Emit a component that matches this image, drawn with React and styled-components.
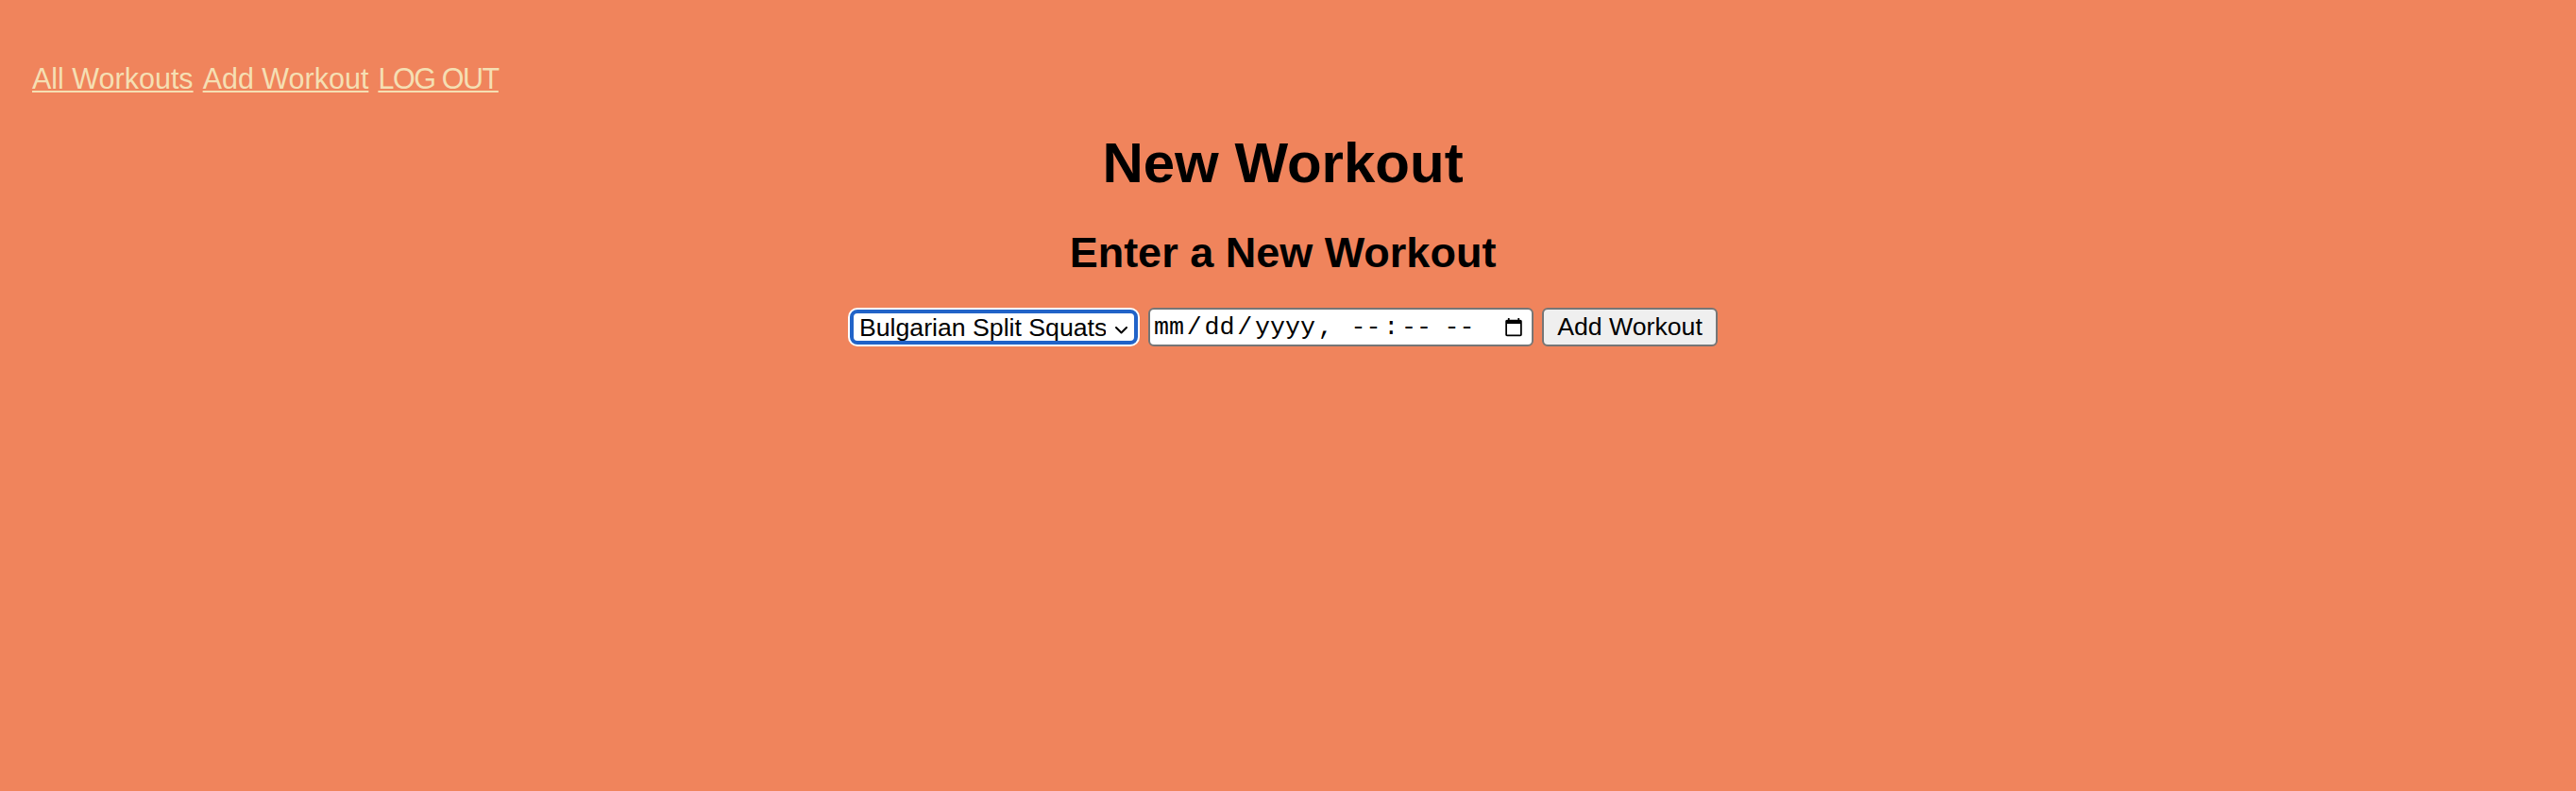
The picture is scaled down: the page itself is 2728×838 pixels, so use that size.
import React from "react";
import styled, { createGlobalStyle } from "styled-components";

const GlobalStyle = createGlobalStyle`
  html, body {
    margin: 0;
    padding: 0;
    background-color: #f0845c;
  }
  body {
    font-family: "Liberation Sans", Arial, sans-serif;
    color: #000;
  }
`;

const Page = styled.div`
  min-height: 100vh;
  background-color: #f0845c;
  padding-top: 66px;
  box-sizing: border-box;
`;

const Nav = styled.nav`
  display: flex;
  gap: 10px;
  padding-left: 34px;
  font-size: 30.5px;
  line-height: 34px;
`;

const NavLink = styled.a`
  color: #f5dfb3;
  text-decoration: underline;
  text-decoration-thickness: 2px;
  text-underline-offset: 2px;
  letter-spacing: ${({ $tight }) => ($tight ? "-1.4px" : "normal")};
`;

const Main = styled.main`
  padding-right: 11px;
  text-align: center;
`;

const Title = styled.h1`
  margin: 39px 0 0;
  font-size: 60px;
  line-height: 67px;
  font-weight: bold;
`;

const Subtitle = styled.h2`
  margin: 36px 0 0;
  font-size: 45px;
  line-height: 51px;
  font-weight: bold;
`;

const Form = styled.form`
  margin-top: 33px;
  display: flex;
  justify-content: center;
  align-items: center;
  gap: 9px;
`;

const SelectWrap = styled.span`
  position: relative;
  display: inline-block;
  padding: 2px;
`;

const Select = styled.select`
  appearance: none;
  -webkit-appearance: none;
  box-sizing: border-box;
  display: block;
  width: 305px;
  height: 37px;
  padding: 0 30px 0 6px;
  border: 4px solid #2163c8;
  border-radius: 8px;
  box-shadow: 0 0 0 2px #fff;
  background-color: #fff;
  font-family: "Liberation Sans", Arial, sans-serif;
  font-size: 26.67px;
  color: #000;
  outline: none;
`;

const Chevron = styled.svg`
  position: absolute;
  right: 13px;
  top: 20px;
  width: 13px;
  height: 8px;
  pointer-events: none;
`;

const DateInput = styled.input`
  box-sizing: border-box;
  width: 408px;
  height: 41px;
  padding: 0 8px 0 3px;
  border: 2px solid #767676;
  border-radius: 6px;
  background-color: #fff;
  font-family: "Liberation Mono", "Courier New", monospace;
  font-size: 26.67px;
  color: #000;

  &::-webkit-datetime-edit-text {
    padding: 0 1.75px;
  }

  &::-webkit-calendar-picker-indicator {
    width: 22px;
    height: 22px;
    padding: 0;
    margin: 0;
  }
`;

const Button = styled.button`
  box-sizing: border-box;
  width: 186px;
  height: 41px;
  padding: 0;
  border: 2px solid #767676;
  border-radius: 6px;
  background-color: #efefef;
  font-family: "Liberation Sans", Arial, sans-serif;
  font-size: 26.67px;
  color: #000;
`;

const exercises = [
  "Bulgarian Split Squats",
  "Squats",
  "Deadlifts",
  "Bench Press",
  "Pull Ups",
];

const App = () => {
  return (
    <>
      <GlobalStyle />
      <Page>
        <Nav>
          <NavLink href="#">All Workouts</NavLink>
          <NavLink href="#">Add Workout</NavLink>
          <NavLink href="#" $tight>
            LOG OUT
          </NavLink>
        </Nav>
        <Main>
          <Title>New Workout</Title>
          <Subtitle>Enter a New Workout</Subtitle>
          <Form onSubmit={(e) => e.preventDefault()}>
            <SelectWrap>
              <Select defaultValue={exercises[0]}>
                {exercises.map((ex) => (
                  <option key={ex} value={ex}>
                    {ex}
                  </option>
                ))}
              </Select>
              <Chevron viewBox="0 0 13 8" fill="none">
                <polyline
                  points="1,1 6.5,6.5 12,1"
                  stroke="#000"
                  strokeWidth="2"
                  strokeLinecap="round"
                  strokeLinejoin="round"
                />
              </Chevron>
            </SelectWrap>
            <DateInput type="datetime-local" />
            <Button type="submit">Add Workout</Button>
          </Form>
        </Main>
      </Page>
    </>
  );
};

export default App;
